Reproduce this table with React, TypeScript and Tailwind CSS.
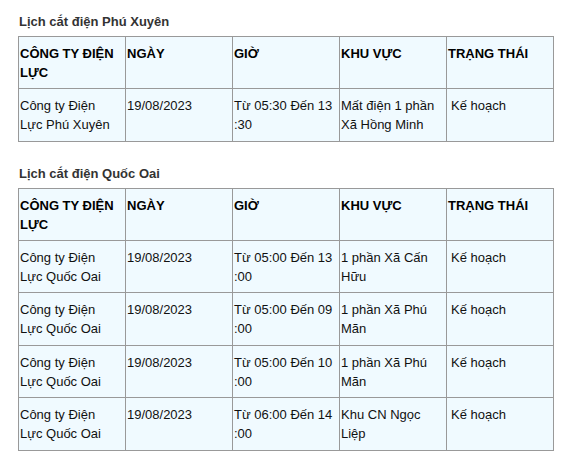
import React from "react"

type Row = {
  company: string[]
  date: string
  time: string[]
  area: string[]
  status: string
}

const HEAD = [["CÔNG TY ĐIỆN", "LỰC"], ["NGÀY"], ["GIỜ"], ["KHU VỰC"], ["TRẠNG THÁI"]]

const phuXuyen: Row[] = [
  {
    company: ["Công ty Điện", "Lực Phú Xuyên"],
    date: "19/08/2023",
    time: ["Từ 05:30 Đến 13", ":30"],
    area: ["Mất điện 1 phần", "Xã Hồng Minh"],
    status: "Kế hoạch",
  },
]

const quocOai: Row[] = [
  {
    company: ["Công ty Điện", "Lực Quốc Oai"],
    date: "19/08/2023",
    time: ["Từ 05:00 Đến 13", ":00"],
    area: ["1 phần Xã Cấn", "Hữu"],
    status: "Kế hoạch",
  },
  {
    company: ["Công ty Điện", "Lực Quốc Oai"],
    date: "19/08/2023",
    time: ["Từ 05:00 Đến 09", ":00"],
    area: ["1 phần Xã Phú", "Mãn"],
    status: "Kế hoạch",
  },
  {
    company: ["Công ty Điện", "Lực Quốc Oai"],
    date: "19/08/2023",
    time: ["Từ 05:00 Đến 10", ":00"],
    area: ["1 phần Xã Phú", "Mãn"],
    status: "Kế hoạch",
  },
  {
    company: ["Công ty Điện", "Lực Quốc Oai"],
    date: "19/08/2023",
    time: ["Từ 06:00 Đến 14", ":00"],
    area: ["Khu CN Ngọc", "Liệp"],
    status: "Kế hoạch",
  },
]

function Lines({ lines }: { lines: string[] }) {
  return (
    <>
      {lines.map((l, i) => (
        <React.Fragment key={i}>
          {i > 0 && <br />}
          {l}
        </React.Fragment>
      ))}
    </>
  )
}

const cell = "border border-[#999] align-top text-left pl-[1px] pr-[1px] pt-[7px] w-[107px]"

function Schedule({ title, rows }: { title: string; rows: Row[] }) {
  return (
    <section>
      <h3 className="text-[13px] leading-[19px] font-bold text-[#333] pl-[19px] mb-[5px]">{title}</h3>
      <table className="ml-[18px] w-[535px] border-collapse table-fixed bg-[#f0faff] text-[13px] leading-[19px] text-[#111]">
        <thead>
          <tr>
            {HEAD.map((h, i) => (
              <th key={i} className={`${cell} pb-[6px] font-bold text-black`}>
                <Lines lines={h} />
              </th>
            ))}
          </tr>
        </thead>
        <tbody>
          {rows.map((r, i) => (
            <tr key={i}>
              <td className={`${cell} pb-[6.5px]`}><Lines lines={r.company} /></td>
              <td className={`${cell} pb-[6.5px]`}>{r.date}</td>
              <td className={`${cell} pb-[6.5px]`}><Lines lines={r.time} /></td>
              <td className={`${cell} pb-[6.5px]`}><Lines lines={r.area} /></td>
              <td className={`${cell} pb-[6.5px] pl-[4px]`}>{r.status}</td>
            </tr>
          ))}
        </tbody>
      </table>
    </section>
  )
}

export default function App() {
  return (
    <div className="w-[570px] h-[470px] bg-white pt-[12px] font-['Liberation_Sans',Arial,sans-serif]">
      <Schedule title="Lịch cắt điện Phú Xuyên" rows={phuXuyen} />
      <div className="h-[22px]" />
      <Schedule title="Lịch cắt điện Quốc Oai" rows={quocOai} />
    </div>
  )
}
